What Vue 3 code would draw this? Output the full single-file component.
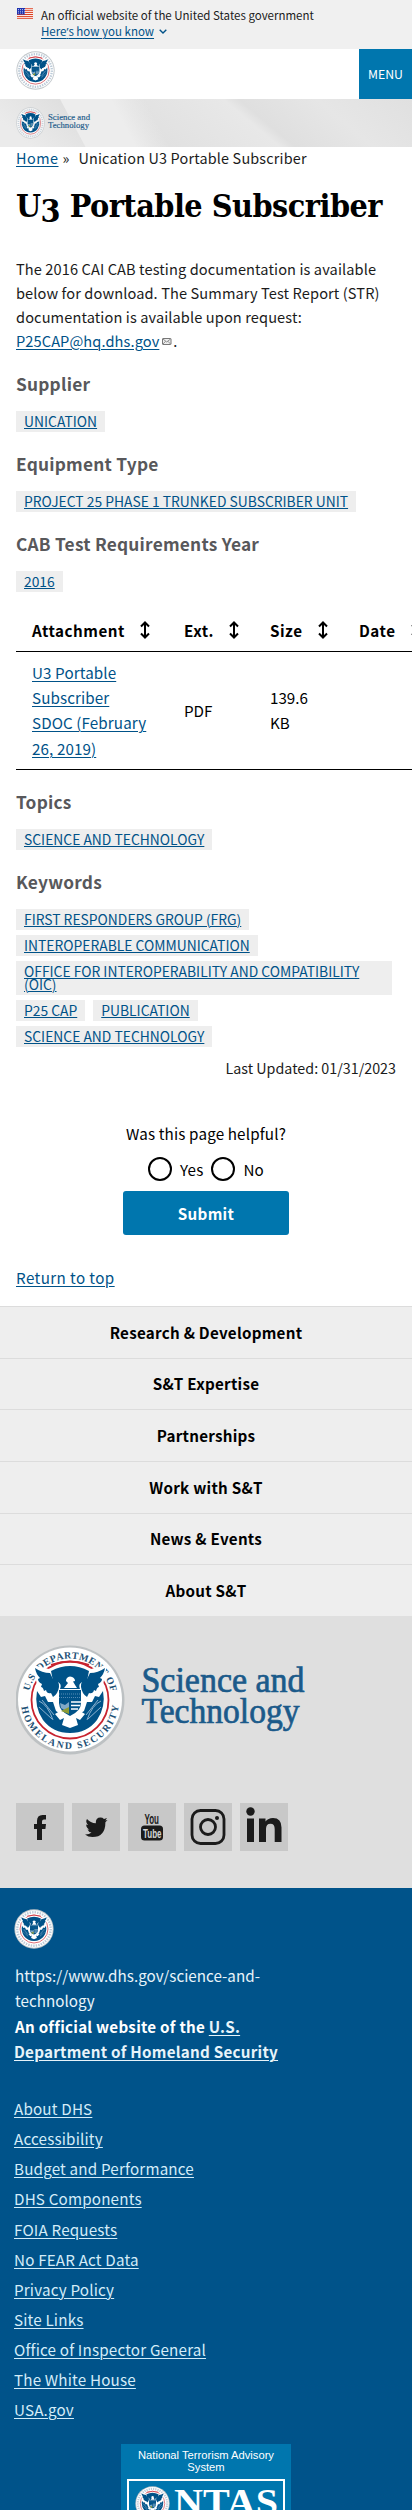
<script setup>
const suppliers = [
  { title: 'Supplier', items: ['UNICATION'] },
  { title: 'Equipment Type', items: ['PROJECT 25 PHASE 1 TRUNKED SUBSCRIBER UNIT'] },
  { title: 'CAB Test Requirements Year', items: ['2016'] },
]
const topics = [
  { title: 'Topics', items: ['SCIENCE AND TECHNOLOGY'] },
  {
    title: 'Keywords',
    items: [
      'FIRST RESPONDERS GROUP (FRG)',
      'INTEROPERABLE COMMUNICATION',
      'OFFICE FOR INTEROPERABILITY AND COMPATIBILITY (OIC)',
      'P25 CAP',
      'PUBLICATION',
      'SCIENCE AND TECHNOLOGY',
    ],
  },
]
const columns = ['Attachment', 'Ext.', 'Size', 'Date']
const nav = ['Research & Development', 'S&T Expertise', 'Partnerships', 'Work with S&T', 'News & Events', 'About S&T']
const links = [
  'About DHS', 'Accessibility', 'Budget and Performance', 'DHS Components', 'FOIA Requests',
  'No FEAR Act Data', 'Privacy Policy', 'Site Links', 'Office of Inspector General', 'The White House', 'USA.gov',
]
</script>

<template>
  <div class="page">
    <svg class="defs" width="0" height="0" aria-hidden="true">
      <symbol id="eagle" viewBox="0 0 110 110">
        <circle cx="55" cy="55" r="38.500" fill="none" stroke="#c8242f" stroke-width="1.800" />
        <path d="M18 20L34 24 55 22 76 24 92 20 88 40 80 50H30L22 40Z" fill="#fff" />
        <path d="M36 19.800Q55 13.500 74 19.800" fill="none" stroke="#c8242f" stroke-width="1.800" />
        <path d="M20 23Q27 28 35 28L38 34Q45 36 44 42Q43 49 38 52L36 48Q32 49 31 45L29 46Q28 42 26 42L27 39Q23 37 23 34L25 33Q21 29 20 23ZM90 23Q83 28 75 28L72 34Q65 36 66 42Q67 49 72 52L74 48Q78 49 79 45L81 46Q82 42 84 42L83 39Q87 37 87 34L85 33Q89 29 90 23Z" fill="#005288" />
        <path d="M36 26Q55 16 74 26L72 36Q62 37 65 44H45Q48 37 38 36Z" fill="#005288" />
        <path d="M51 36Q51 32 55 31.500Q60 32 60 36L58 36.500Q60 40 62 43H49L53 38Z" fill="#fff" />
        <path d="M22 46L26 52 30 51 33 57 38 57 41 66 44 68 55 74 66 68 69 66 72 57 77 57 80 51 84 52 88 46Q91 62 82 75 72 88 55 88 38 88 28 75 19 62 22 46Z" fill="#005288" />
        <path d="M44 45H66V58Q66 66 55 71 44 66 44 58Z" fill="#005288" />
        <path d="M44 49H66M44 52.500H66" stroke="#6b9cc0" stroke-width=".8" stroke-dasharray="1 1" />
        <path d="M56 57H66M56 60.500H65M56 64H63" stroke="#fff" stroke-width="1.300" />
        <path d="M45 58L50 60 54 57V68L46 63Z" fill="#7fa8c6" />
        <path d="M46 66L54 62V69Z" fill="#8c9b35" />
        <path d="M40 69L45 66 50 71H60L65 66 70 69 65 75 61 73 63 80 55 83 47 80 49 73 45 75Z" fill="#fff" />
        <path d="M24 56Q33 60 38 75M27 55L39 70M24 62L37 74M86 56Q77 60 72 75M83 55L71 70M86 62L73 74" stroke="#8db2d0" stroke-width="1" fill="none" />
      </symbol>
      <path id="arcTop" d="M13.500 55a41.500 41.500 0 0 1 83 0" fill="none" />
      <path id="arcBottom" d="M6 55a49 49 0 0 0 98 0" fill="none" />
      <symbol id="ring" viewBox="0 0 110 110">
        <circle cx="55" cy="55" r="54" fill="#bfc5c9" />
        <circle cx="55" cy="55" r="51.500" fill="#fff" />
        <circle cx="55" cy="55" r="46" fill="none" stroke="#bccbd8" stroke-width="6.500" stroke-dasharray="4 3" />
      </symbol>
    </svg>

    <div class="banner">
      <svg class="flag" width="16" height="11" viewBox="0 0 16 11">
        <rect width="16" height="11" fill="#fff" />
        <path d="M0 .75H16M0 2.700H16M0 4.600H16M0 6.500H16M0 8.400H16M0 10.300H16" stroke="#db3e1f" stroke-width="1" />
        <rect width="8" height="6.500" fill="#1e33b1" />
        <path d="M1 1.500H8M1 3.300H8M1 5.100H8" stroke="#fff" stroke-width=".8" stroke-dasharray=".8 1.200" />
      </svg>
      <div>
        <div>An official website of the United States government</div>
        <div class="know">
          <a>Here<span class="apos">’</span>s how you know</a>
          <svg width="8" height="5" viewBox="0 0 8 5"><path d="M.7 .8L4 4 7.300 .8" fill="none" stroke="#005288" stroke-width="1.400" /></svg>
        </div>
      </div>
    </div>

    <header class="header">
      <svg class="mark" width="39" height="39" viewBox="0 0 110 110"><use href="#ring" /><use href="#eagle" /></svg>
      <button class="menu">MENU</button>
    </header>

    <div class="subheader">
      <svg width="76" height="34" viewBox="0 0 76 34">
        <svg x="0" y="1" width="29" height="32" viewBox="0 0 110 110" preserveAspectRatio="none"><use href="#ring" opacity=".7" /><use href="#eagle" /></svg>
        <g class="logotype small">
          <text x="32" y="13.500" textLength="42" lengthAdjust="spacingAndGlyphs">Science and</text>
          <text x="32" y="21.500" textLength="41" lengthAdjust="spacingAndGlyphs">Technology</text>
        </g>
      </svg>
    </div>

    <main class="main">
      <nav class="crumbs"><a>Home</a><span class="sep">»</span><span>Unication U3 Portable Subscriber</span></nav>
      <h1>U<span class="old">3</span> Portable Subscriber</h1>
      <p class="intro">
        The 2016 CAI CAB testing documentation is available<br />below for download. The Summary Test Report (STR)<br />documentation is available upon request:<br /><a>P25CAP@hq.dhs.gov</a><svg class="mail" width="10" height="7" viewBox="0 0 10 7"><rect x=".5" y=".5" width="8.500" height="6" rx=".5" fill="#eee" stroke="#777" /><path d="M1 1L4.700 4 8.500 1M1 6L3.500 3.300M8.500 6L6 3.300" fill="none" stroke="#777" stroke-width=".8" /></svg>.
      </p>

      <section v-for="s in suppliers" :key="s.title" class="terms">
        <h2>{{ s.title }}</h2>
        <div class="tags"><a v-for="t in s.items" :key="t" class="tag">{{ t }}</a></div>
      </section>

      <div class="table">
        <div class="row head">
          <div v-for="c in columns" :key="c" class="th">
            <span>{{ c }}</span>
            <svg width="10" height="18" viewBox="0 0 10 18"><path d="M5 2V16M1 5.500L5 1.500 9 5.500M1 12.500L5 16.500 9 12.500" fill="none" stroke="#000" stroke-width="2" /></svg>
          </div>
        </div>
        <div class="row body">
          <div class="td"><a>U3 Portable<br />Subscriber<br />SDOC (February<br />26, 2019)</a></div>
          <div class="td">PDF</div>
          <div class="td">139.6<br />KB</div>
          <div class="td"></div>
        </div>
      </div>

      <section v-for="s in topics" :key="s.title" class="terms">
        <h2>{{ s.title }}</h2>
        <div class="tags"><a v-for="t in s.items" :key="t" class="tag">{{ t }}</a></div>
      </section>

      <div class="updated">Last Updated: 01/31/2023</div>

      <form class="helpful" @submit.prevent>
        <div class="question">Was this page helpful?</div>
        <div class="choices">
          <label><i class="radio"></i>Yes</label>
          <label><i class="radio"></i>No</label>
        </div>
        <button class="submit">Submit</button>
      </form>

      <div class="return"><a>Return to top</a></div>
    </main>

    <nav class="nav"><a v-for="n in nav" :key="n">{{ n }}</a></nav>

    <section class="brand">
      <svg class="brand-logo" width="300" height="112" viewBox="0 0 300 112">
        <circle cx="54" cy="55" r="54.500" fill="#bdc1c3" />
        <circle cx="54" cy="54.500" r="52" fill="#fff" />
        <g class="seal-text" transform="translate(-1 0)">
          <text><textPath href="#arcTop" startOffset="9" textLength="113">U.S. DEPARTMENT OF</textPath></text>
          <text><textPath href="#arcBottom" startOffset="7" textLength="141">HOMELAND SECURITY</textPath></text>
        </g>
        <use href="#eagle" x="-1" y="0" width="110" height="110" />
        <g class="logotype">
          <text x="125.500" y="47" textLength="163" lengthAdjust="spacingAndGlyphs">Science and</text>
          <text x="125.500" y="78" textLength="158" lengthAdjust="spacingAndGlyphs">Technology</text>
        </g>
      </svg>
      <div class="social">
        <span><svg viewBox="0 0 48 48"><path d="M21 37V26H18V21H21V18Q21 12 26.500 12H30V16.500H28Q26 16.500 26 18.500V21H30L29.400 26H26V37Z" /></svg></span>
        <span><svg viewBox="0 0 48 48"><path d="M13 31.500Q17 31.700 19.500 29.500Q16.500 29 15.500 26.500H17.500Q14.200 25 14.200 21.500L16.200 22Q13 19 15 16Q18.500 20 23.800 20.300Q23.500 14.500 28.500 14.500Q30.500 14.500 32 15.900L35 14.900L33.300 17.400L35.500 17L33.400 19.200Q33.400 34 20.500 34Q16 34 13 31.500Z" /></svg></span>
        <span><svg viewBox="0 0 48 48"><text class="yt" x="16.500" y="20.500" textLength="14.500" lengthAdjust="spacingAndGlyphs">You</text><rect x="13" y="22.500" width="22" height="15" rx="3.500" /><text class="yt tube" x="15" y="35" textLength="18.500" lengthAdjust="spacingAndGlyphs">Tube</text></svg></span>
        <span><svg viewBox="0 0 48 48"><g fill="none" stroke="#1b1b1b"><rect x="8" y="7.500" width="32" height="33" rx="8.500" stroke-width="2.800" /><circle cx="24" cy="24" r="7.500" stroke-width="2.800" /></g><circle cx="33" cy="15" r="2" /></svg></span>
        <span><svg viewBox="0 0 48 48"><circle cx="10.500" cy="8.500" r="4.200" /><path d="M7 15.500H14V39H7ZM19 15.500H25.500V18.500Q28 15 33 15Q41.500 15 41.500 24.500V39H34.700V26Q34.700 20.800 30.500 20.800Q26 20.800 26 26V39H19Z" /></svg></span>
      </div>
    </section>

    <footer class="footer">
      <svg class="foot-seal" width="40" height="40" viewBox="0 0 110 110"><use href="#ring" /><use href="#eagle" /></svg>
      <div class="ident">https://www.dhs.gov/science-and-<br />technology<br /><b>An official website of the <a>U.S.</a><br /><a class="dept">Department of Homeland Security</a></b></div>
      <ul><li v-for="l in links" :key="l"><a>{{ l }}</a></li></ul>
      <div class="ntas">
        <div>National Terrorism Advisory<br />System</div>
        <div class="ntas-box">
          <svg width="152" height="60" viewBox="0 0 152 60">
            <svg x="6" y="5" width="35" height="35" viewBox="0 0 110 110"><use href="#ring" /><use href="#eagle" /></svg>
            <text x="45" y="34" textLength="104" lengthAdjust="spacingAndGlyphs">NTAS</text>
          </svg>
        </div>
      </div>
    </footer>
  </div>
</template>

<style scoped>
.page { width: 412px; height: 2510px; overflow: hidden; position: relative; background: #fff; color: #1b1b1b; font: 14.6px/24px 'Noto Sans CJK SC', sans-serif; letter-spacing: 0.1px; }
.defs { position: absolute; }
svg { display: block; }
a { color: #005288; text-decoration: underline; text-decoration-thickness: 1px; text-underline-offset: 2px; }
button { border: 0; padding: 0; font: inherit; letter-spacing: inherit; color: #fff; background: #0076ae; }

.banner { height: 49px; box-sizing: border-box; padding: 7px 0 0 17px; display: flex; gap: 8px; background: #f0f0f0; font-size: 11.5px; line-height: 16px; letter-spacing: 0; }
.flag { margin-top: 1px; }
.know { display: flex; align-items: center; gap: 5px; }
.apos { font-family: 'Open Sans', sans-serif; }

.header { height: 50px; display: flex; justify-content: space-between; padding-left: 16px; }
.mark { margin-top: 2px; }
.menu { width: 53px; height: 50px; font-size: 12.3px; letter-spacing: 0; }

.subheader { height: 48px; box-sizing: border-box; padding: 7px 16px; background: linear-gradient(62deg, transparent 75px, #ededed 76px 120px, transparent 150px), linear-gradient(40deg, #ebebeb 20px, #dedede 80px, #e8e8e8 180px, #dfdfdf 190px, #e6e6e6 240px, #e0e0e0 300px); }
.logotype { font: 35px 'Liberation Serif', serif; fill: #1b5a8a; stroke: #1b5a8a; stroke-width: 0.7px; letter-spacing: 0; }
.logotype.small { font-size: 8.5px; stroke-width: 0.15px; }

.main { padding: 0 16px; height: 1159px; }
.crumbs { display: flex; height: 24px; line-height: 22px; font-size: 14.4px; letter-spacing: 0.18px; white-space: nowrap; }
.crumbs a { letter-spacing: 0.5px; }
.sep { margin: 0 9px 0 4px; letter-spacing: 0; }
h1 { margin: 11px 0 0; height: 74.5px; font: 700 32px/48px 'DejaVu Serif', serif; font-stretch: condensed; letter-spacing: -0.5px; white-space: nowrap; color: #000; }
.old { position: relative; top: 5px; }
.intro { margin: 0 -10px 19px 0; white-space: nowrap; }
.mail { display: inline-block; margin: 0 1px 1px 3px; vertical-align: 1px; }

.terms { margin-bottom: 20px; }
h2 { margin: 0 0 15px; font-size: 17.3px; line-height: 24px; letter-spacing: 0.23px; color: #58585b; }
.tags { display: flex; flex-wrap: wrap; gap: 5px 8px; }
.tag { max-width: 360px; padding: 4px 8px; font-size: 13.85px; line-height: 13px; letter-spacing: 0; background: #eee; text-underline-offset: 1px; }

.table { width: 480px; margin: -2px 0 20px; font-size: 15.2px; line-height: 25.4px; letter-spacing: 0; color: #000; }
.row { display: grid; grid-template-columns: 152px 86px 89px 153px; border-bottom: 1px solid #000; }
.th { display: flex; align-items: center; gap: 15.500px; padding: 8px 0 7.600px 16px; font-weight: 700; letter-spacing: 0.5px; }
.td { display: flex; align-items: center; padding: 8px 0 7.600px 16px; white-space: nowrap; }
.td a { letter-spacing: 0.1px; }

.updated { margin-top: -11px; text-align: right; font-size: 14.3px; letter-spacing: 0; }
.helpful { margin-top: 41px; text-align: center; color: #000; font-size: 15.2px; letter-spacing: 0.15px; }
.choices { display: flex; justify-content: center; gap: 8px; margin-top: 12px; }
.choices label { display: flex; gap: 8px; }
.radio { width: 24px; height: 24px; box-sizing: border-box; border: 2px solid #000; border-radius: 50%; }
.submit { width: 166px; height: 44px; margin-top: 10px; border-radius: 3px; font-size: 15.2px; font-weight: 700; letter-spacing: 0.3px; }
.return { margin-top: 30px; font-size: 15.2px; letter-spacing: 0.4px; }

.nav { display: flex; flex-direction: column; height: 310px; background: #eee; text-align: center; font-size: 15.2px; font-weight: 700; line-height: 25.400px; letter-spacing: 0.25px; }
.nav a { flex: 1; box-sizing: border-box; border-top: 1px solid #dcdcdc; padding-top: 12.500px; text-decoration: none; color: #000; }

.brand { height: 272px; box-sizing: border-box; padding: 29px 16px 0; background: #dfdfdf; }
.seal-text { font: 700 9.8px 'Liberation Serif', serif; fill: #1d5075; letter-spacing: 0; }
.social { display: flex; gap: 8px; margin-top: 46px; }
.social span { width: 48px; height: 48px; background: #c8c8c8; fill: #1b1b1b; }
.yt { font: 700 14px 'Liberation Sans', sans-serif; letter-spacing: 0; }
.tube { font-size: 13px; fill: #d6d6d6; }

.footer { height: 622px; box-sizing: border-box; padding: 21px 14px 0; background: #00538a; color: #e8f4fa; font-size: 15.2px; line-height: 25.400px; letter-spacing: 0.18px; }
.footer a { color: #d4ecf8; }
.ident { margin: 14px 0 0 1px; letter-spacing: 0.02px; }
.ident b { color: #fff; letter-spacing: 0.25px; }
.ident .dept { margin-left: -1px; }
.ident b a { color: #e8f4fa; }
ul { list-style: none; margin: 28.500px 0 0; padding: 0; }
li { height: 30.100px; line-height: 30.100px; }
.ntas { width: 170px; height: 80px; margin: 20px auto 0; background: #0076ae; text-align: center; font: 11.200px/12px 'Liberation Sans', sans-serif; letter-spacing: 0; color: #fff; padding-top: 4.500px; }
.ntas-box { width: 158px; margin: 6px auto 0; box-sizing: border-box; border: 2px solid #fff; }
.ntas-box text { font: 700 37px 'Liberation Serif', serif; fill: #fff; }
</style>
